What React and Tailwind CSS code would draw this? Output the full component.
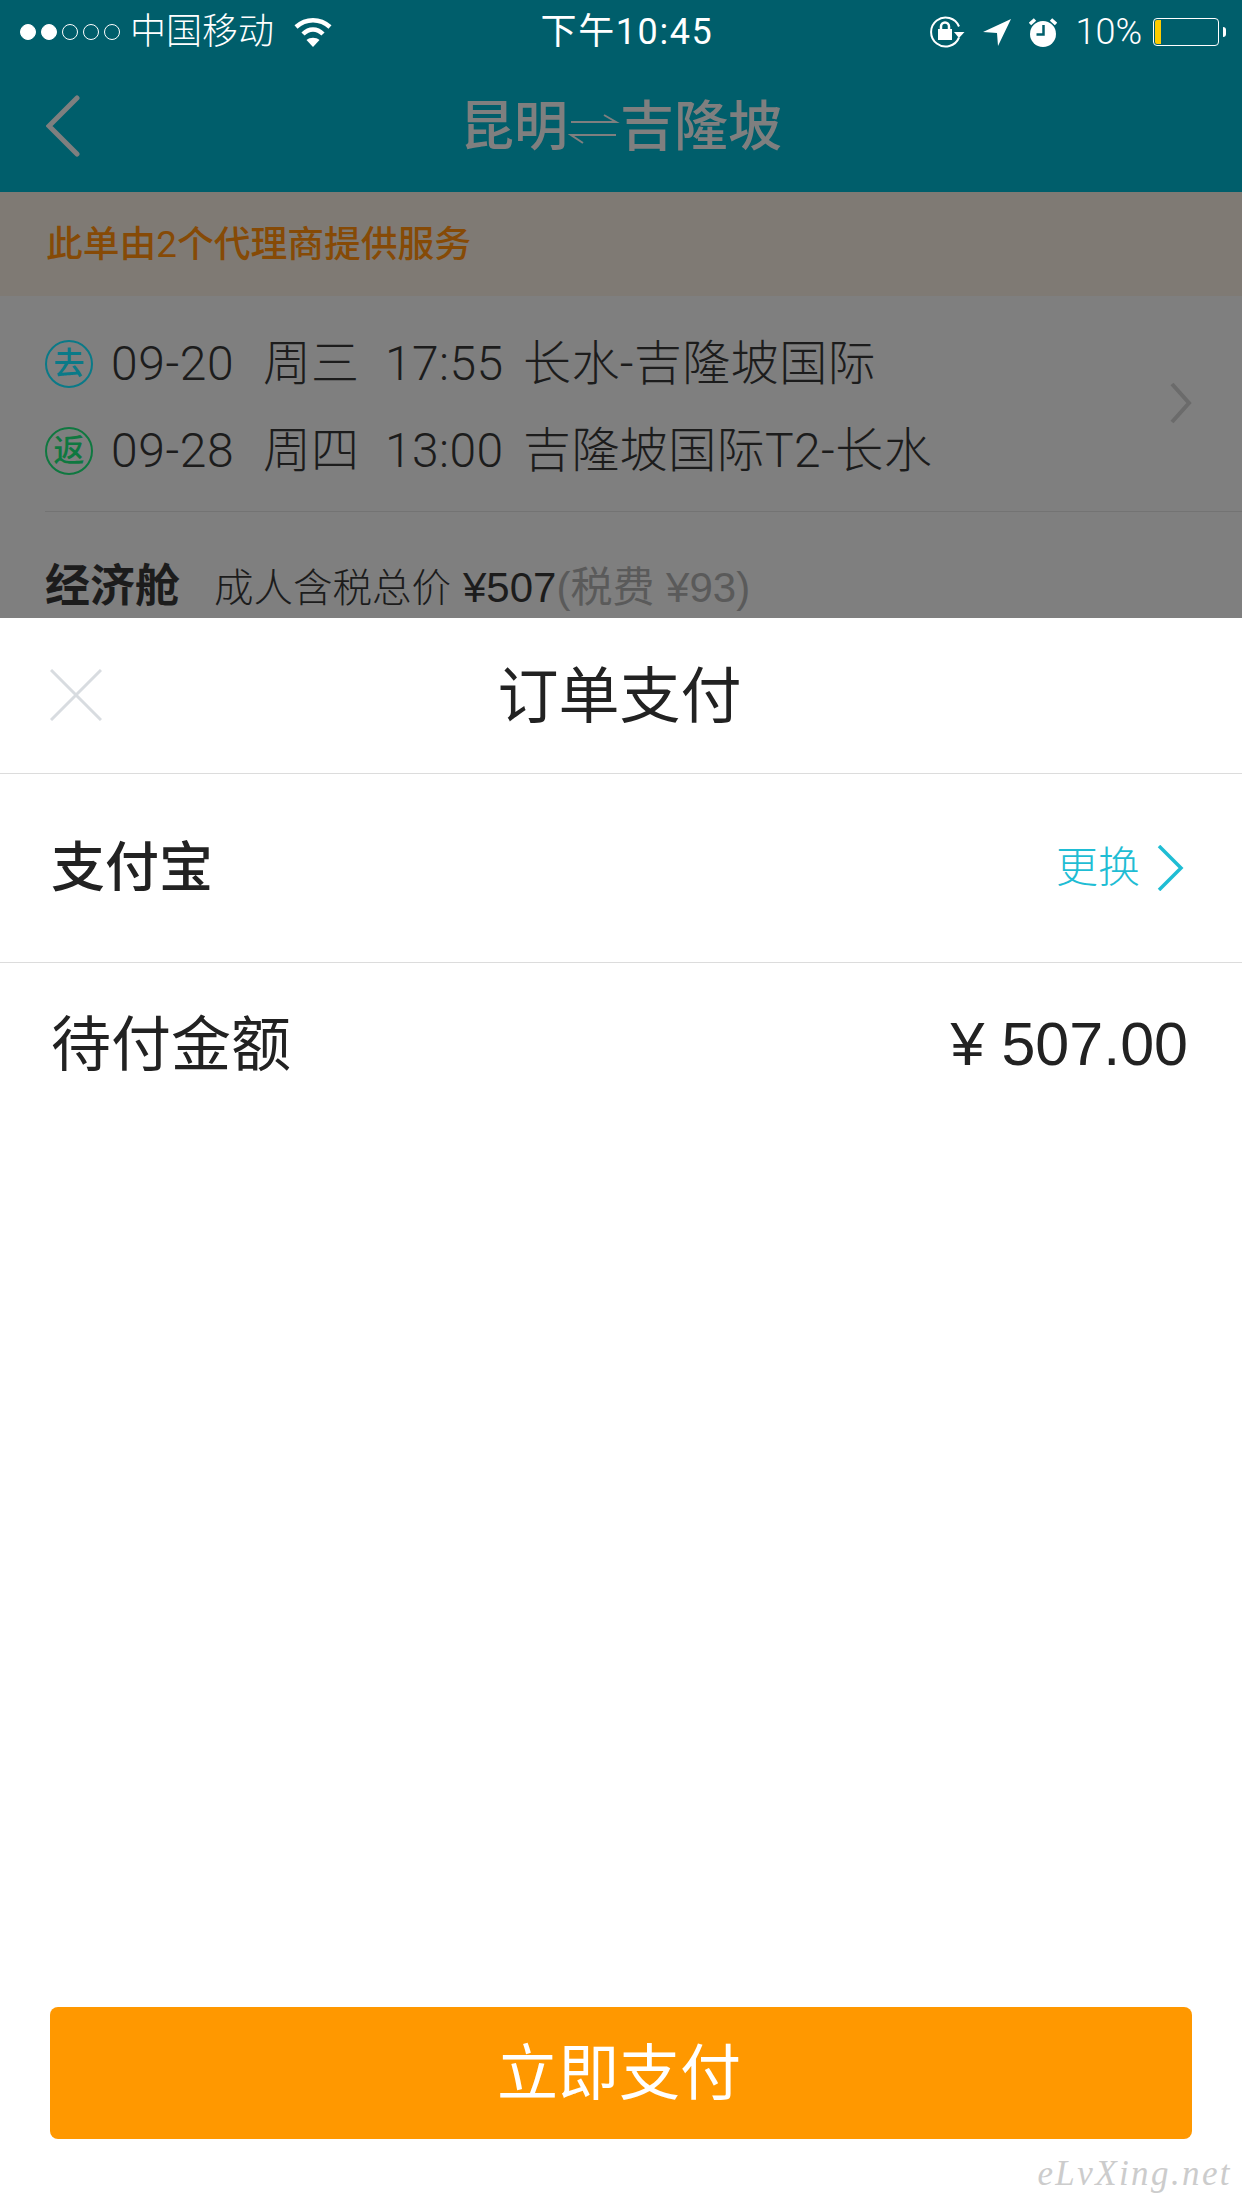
const cjk = "font-['Roboto','Noto_Sans_CJK_SC',sans-serif]"
const latin = "font-['Liberation_Sans','Noto_Sans_CJK_SC',sans-serif]"

function SignalDots() {
  return (
    <div className="flex items-center gap-[5px]">
      {[true, true, false, false, false].map((filled, i) => (
        <span
          key={i}
          className={`w-4 h-4 rounded-full border border-white ${filled ? 'bg-white' : ''}`}
        />
      ))}
    </div>
  )
}

function Wifi() {
  return (
    <svg width="38" height="32" viewBox="0 0 38 32" fill="none" stroke="white" strokeWidth="4.5">
      <path d="M2 11 C12 2 26 2 36 11" />
      <path d="M9 18 C15 12 23 12 29 18" />
      <path d="M19 31 L12.5 24 C16 21 22 21 25.5 24 Z" fill="white" stroke="none" />
    </svg>
  )
}

function RotationLock() {
  return (
    <svg width="35" height="32" viewBox="0 0 35 32" fill="none">
      <path d="M29 21.5 A14.5 14.5 0 1 1 29 10.5" stroke="white" strokeWidth="2" />
      <path d="M24 16 H34.5 L29 22 Z" fill="white" />
      <rect x="8" y="13" width="14" height="11" fill="white" />
      <path d="M11 13 V10.5 A4 4 0 0 1 19 10.5 V13" stroke="white" strokeWidth="2.5" />
    </svg>
  )
}

function LocationArrow() {
  return (
    <svg width="28" height="27" viewBox="0 0 28 27">
      <path d="M28 0 L15 27 L14 14 L0 13 Z" fill="white" />
    </svg>
  )
}

function Alarm() {
  return (
    <svg width="28" height="29" viewBox="0 0 28 29" fill="none">
      <ellipse cx="14" cy="16" rx="13" ry="13" fill="white" />
      <path d="M1 6 L6 1.5 M27 6 L22 1.5" stroke="white" strokeWidth="3.5" />
      <path d="M14.5 7 V16.5 H7.5" stroke="#005e6b" strokeWidth="2.5" />
    </svg>
  )
}

function Battery() {
  return (
    <div className="flex items-center">
      <div className="w-[66px] h-7 border border-white rounded-[4px] p-px flex">
        <div className="w-[6px] bg-[#ffcc00] rounded-l-[2px]" />
      </div>
      <div className="w-[3px] h-[10px] ml-1 bg-white rounded-r-full" />
    </div>
  )
}

function StatusBar() {
  return (
    <div className="h-[62px] pt-[2px] pl-5 pr-[16px] grid grid-cols-[1fr_auto_1fr] items-center text-white text-[36px] leading-none">
      <div className="flex items-center">
        <SignalDots />
        <span className="ml-[10px] font-light">中国移动</span>
        <span className="ml-5"><Wifi /></span>
      </div>
      <span className="tracking-[1.6px] ml-[8px]">下午10:45</span>
      <div className="flex items-center justify-end">
        <RotationLock />
        <span className="ml-[18px]"><LocationArrow /></span>
        <span className="ml-[18px]"><Alarm /></span>
        <span className="ml-[18px] font-light">10%</span>
        <span className="ml-[11px]"><Battery /></span>
      </div>
    </div>
  )
}

function NavBar() {
  return (
    <div className="h-[130px] pt-[2px] px-[46px] grid grid-cols-[1fr_auto_1fr] items-center text-[#7f7f7f]">
      <svg className="-mt-[4px]" width="34" height="62" viewBox="0 0 34 62" fill="none" stroke="#7f7f7f" strokeWidth="5" strokeLinecap="round">
        <path d="M31 3 L3 31 L31 59" />
      </svg>
      <div className="flex items-center text-[54px] leading-none font-[450]">
        <span>昆明</span>
        <svg width="52" height="32" viewBox="0 0 52 32" fill="none" stroke="#7f7f7f" strokeWidth="2">
          <path d="M3 10 H48 L36 3" />
          <path d="M48 23 H3 L15 31" />
        </svg>
        <span>吉隆坡</span>
      </div>
      <div />
    </div>
  )
}

function Badge({ label, tone }) {
  return (
    <span className={`w-12 h-12 shrink-0 rounded-full border-2 flex items-center justify-center text-[31px] leading-none font-medium ${tone}`}>
      {label}
    </span>
  )
}

function FlightRow({ label, tone, date, day, time, route }) {
  return (
    <div className="h-[87px] flex items-center text-[48px] leading-none font-light text-[#1c1c1c]">
      <Badge label={label} tone={tone} />
      <span className="ml-[18px] w-[124px] tracking-[0.6px]">{date}</span>
      <span className="ml-[28px] w-[96px]">{day}</span>
      <span className="ml-[26px] w-[119px] tracking-[0.4px]">{time}</span>
      <span className="ml-[19px] tracking-[0.4px]">{route}</span>
    </div>
  )
}

function OrderSummary() {
  return (
    <div className="h-[322px] overflow-hidden bg-[#7f7f7f] pl-[45px] pt-[24px]">
      <div className="relative border-b border-[#737373] h-[192px]">
        <FlightRow label="去" tone="border-[#0a7a88] text-[#0a7a88]" date="09-20" day="周三" time="17:55" route="长水-吉隆坡国际" />
        <FlightRow label="返" tone="border-[#0f7840] text-[#0f7840]" date="09-28" day="周四" time="13:00" route="吉隆坡国际T2-长水" />
        <svg className="absolute right-[50px] top-[62px]" width="22" height="42" viewBox="0 0 22 42" fill="none" stroke="#6b6b6b" strokeWidth="4">
          <path d="M2 2 L19 21 L2 40" />
        </svg>
      </div>
      <div className="flex items-baseline pt-[52px] leading-none text-[#1c1c1c]">
        <span className="text-[45px] font-[600]">经济舱</span>
        <span className="ml-[34px] text-[39.5px] font-light">成人含税总价</span>
        <span className={`ml-[12px] text-[42px] ${latin}`}>¥507</span>
        <span className={`text-[42px] text-[#5a5a5a] ${latin}`}>(税费 ¥93)</span>
      </div>
    </div>
  )
}

function PaySheet() {
  return (
    <div className="relative flex-1 flex flex-col bg-white text-[#222222]">
      <div className="h-[156px] pt-[2px] border-b border-[#dcdcdc] px-[50px] grid grid-cols-[1fr_auto_1fr] items-center">
        <svg className="-mt-[3px]" width="52" height="52" viewBox="0 0 52 52" fill="none" stroke="#d8dce0" strokeWidth="3">
          <path d="M1 1 L51 51 M51 1 L1 51" />
        </svg>
        <span className="mr-[3px] pt-[2px] text-[61px] leading-none">订单支付</span>
        <div />
      </div>
      <div className="h-[189px] border-b border-[#dcdcdc] pl-[51px] pr-[58px] flex items-center justify-between">
        <span className="pt-[2px] text-[54px] leading-none font-[450]">支付宝</span>
        <div className="flex items-center text-[#1fbdd4]">
          <span className="text-[42px] leading-none font-light">更换</span>
          <svg className="ml-[17px]" width="27" height="46" viewBox="0 0 27 46" fill="none" stroke="#1fbdd4" strokeWidth="3.5">
            <path d="M2 1 L24 23 L2 45" />
          </svg>
        </div>
      </div>
      <div className="h-[166px] pl-[51px] pr-[54px] flex items-center justify-between">
        <span className="text-[60px] leading-none">待付金额</span>
        <span className={`pb-[3px] text-[61px] leading-none ${latin}`}>¥ 507.00</span>
      </div>
      <div className="flex-1" />
      <button className="mx-[50px] mb-[69px] h-[132px] pt-[3px] pr-[4px] rounded-lg bg-[#ff9800] text-white text-[61px] leading-none">
        立即支付
      </button>
      <span className="absolute right-[10px] bottom-[17px] font-['Liberation_Serif',serif] italic text-[35px] leading-none tracking-[2.4px] text-[#cccccc]">
        eLvXing.net
      </span>
    </div>
  )
}

export default function App() {
  return (
    <div className={`w-[1242px] h-[2208px] overflow-hidden flex flex-col ${cjk}`}>
      <div className="bg-[#005e6b]">
        <StatusBar />
        <NavBar />
      </div>
      <div className="h-[104px] pt-[2px] bg-[#7f7a74] pl-[46px] flex items-center text-[#864a06] text-[36.75px] leading-none font-[450]">
        此单由2个代理商提供服务
      </div>
      <OrderSummary />
      <PaySheet />
    </div>
  )
}
